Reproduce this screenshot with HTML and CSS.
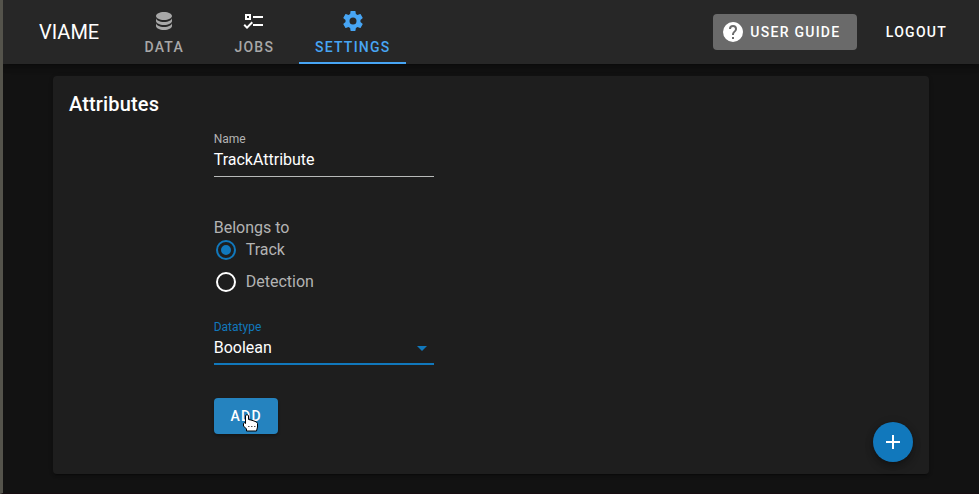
FILE: index.html
```html
<!DOCTYPE html>
<html lang="en">
<head>
<meta charset="utf-8">
<title>VIAME</title>
<link rel="stylesheet" href="styles.css">
</head>
<body>
<header class="bar">
  <div class="brand">VIAME</div>
  <nav class="tabs">
    <a class="tab"><svg class="icon" viewBox="0 0 24 24"><path d="M12,3C7.58,3 4,4.79 4,7C4,9.21 7.58,11 12,11C16.42,11 20,9.21 20,7C20,4.79 16.42,3 12,3M4,9V12C4,14.21 7.58,16 12,16C16.42,16 20,14.21 20,12V9C20,11.21 16.42,13 12,13C7.58,13 4,11.21 4,9M4,14V17C4,19.21 7.58,21 12,21C16.42,21 20,19.21 20,17V14C20,16.21 16.42,18 12,18C7.58,18 4,16.21 4,14Z"/></svg><span>DATA</span></a>
    <a class="tab"><svg class="icon icon-white" viewBox="0 0 24 24"><path d="M3,5H9V11H3V5M5,7V9H7V7H5M11,7H21V9H11V7M11,15H21V17H11V15M5,20L1.5,16.5L2.91,15.09L5,17.17L9.59,12.59L11,14L5,20Z"/></svg><span>JOBS</span></a>
    <a class="tab tab-active"><svg class="icon" viewBox="0 0 24 24"><path d="M12,15.5A3.5,3.5 0 0,1 8.5,12A3.5,3.5 0 0,1 12,8.5A3.5,3.5 0 0,1 15.5,12A3.5,3.5 0 0,1 12,15.5M19.43,12.97C19.47,12.65 19.5,12.33 19.5,12C19.5,11.67 19.47,11.34 19.43,11L21.54,9.37C21.73,9.22 21.78,8.95 21.66,8.73L19.66,5.27C19.54,5.05 19.27,4.96 19.05,5.05L16.56,6.05C16.04,5.66 15.5,5.32 14.87,5.07L14.5,2.42C14.46,2.18 14.25,2 14,2H10C9.75,2 9.54,2.18 9.5,2.42L9.13,5.07C8.5,5.32 7.96,5.66 7.44,6.05L4.95,5.05C4.73,4.96 4.46,5.05 4.34,5.27L2.34,8.73C2.21,8.95 2.27,9.22 2.46,9.37L4.57,11C4.53,11.34 4.5,11.67 4.5,12C4.5,12.33 4.53,12.65 4.57,12.97L2.46,14.63C2.27,14.78 2.21,15.05 2.34,15.27L4.34,18.73C4.46,18.95 4.73,19.03 4.95,18.95L7.44,17.94C7.96,18.34 8.5,18.68 9.13,18.93L9.5,21.58C9.54,21.82 9.75,22 10,22H14C14.25,22 14.46,21.82 14.5,21.58L14.87,18.93C15.5,18.67 16.04,18.34 16.56,17.94L19.05,18.95C19.27,19.03 19.54,18.95 19.66,18.73L21.66,15.27C21.78,15.05 21.73,14.78 21.54,14.63L19.43,12.97Z"/></svg><span>SETTINGS</span></a>
  </nav>
  <button class="btn guide"><svg class="icon" viewBox="0 0 24 24"><path d="M15.07,11.25L14.17,12.17C13.45,12.89 13,13.5 13,15H11V14.5C11,13.39 11.45,12.39 12.17,11.67L13.41,10.41C13.78,10.05 14,9.55 14,9C14,7.89 13.1,7 12,7A2,2 0 0,0 10,9H8A4,4 0 0,1 12,5A4,4 0 0,1 16,9C16,9.88 15.64,10.67 15.07,11.25M13,19H11V17H13M12,2A10,10 0 0,0 2,12A10,10 0 0,0 12,22A10,10 0 0,0 22,12C22,6.47 17.5,2 12,2Z"/></svg><span>USER GUIDE</span></button>
  <button class="btn logout">LOGOUT</button>
</header>
<main class="card">
  <h1 class="title">Attributes</h1>
  <form class="form">
    <div class="field">
      <label class="label">Name</label>
      <div class="value">TrackAttribute</div>
    </div>
    <div class="group">
      <div class="legend">Belongs to</div>
      <div class="option"><svg class="icon icon-blue" viewBox="0 0 24 24"><path d="M12,20A8,8 0 0,1 4,12A8,8 0 0,1 12,4A8,8 0 0,1 20,12A8,8 0 0,1 12,20M12,2A10,10 0 0,0 2,12A10,10 0 0,0 12,22A10,10 0 0,0 22,12A10,10 0 0,0 12,2M12,7A5,5 0 0,0 7,12A5,5 0 0,0 12,17A5,5 0 0,0 17,12A5,5 0 0,0 12,7Z"/></svg><span>Track</span></div>
      <div class="option"><svg class="icon icon-white" viewBox="0 0 24 24"><path d="M12,20A8,8 0 0,1 4,12A8,8 0 0,1 12,4A8,8 0 0,1 20,12A8,8 0 0,1 12,20M12,2A10,10 0 0,0 2,12A10,10 0 0,0 12,22A10,10 0 0,0 22,12A10,10 0 0,0 12,2Z"/></svg><span>Detection</span></div>
    </div>
    <div class="field field-focus">
      <label class="label">Datatype</label>
      <div class="value"><span>Boolean</span><svg class="icon" viewBox="0 0 24 24"><path d="M7,10L12,15L17,10H7Z"/></svg></div>
    </div>
    <button type="button" class="btn add">ADD
      <svg class="pointer" viewBox="0 0 17 19"><path d="M3.5 1.500Q5-.2 6.500 1.500V5.500L9 6L12 7L14.500 8L15.500 9.500V13L14.500 17H4.500V15L1.500 12V9.500Q2.200 8 3.500 9.500Z"/><path class="pointer-lines" d="M6 12.500H13.500" stroke-dasharray="1.500 1.500"/></svg>
    </button>
  </form>
  <button class="fab"><svg class="icon" viewBox="0 0 24 24"><path d="M19,13H13V19H11V13H5V11H11V5H13V11H19V13Z"/></svg></button>
</main>
</body>
</html>
```
FILE: styles.css
```css
* { box-sizing: border-box; }
body {
  margin: 0;
  height: 494px;
  overflow: hidden;
  background: #121212;
  border-left: 3px solid #54534b;
  border-bottom: 1px solid #160c10;
  color: #fff;
  font-family: Roboto, sans-serif;
  font-size: 16px;
}
.icon { width: 24px; height: 24px; fill: currentColor; display: block; flex: none; }
.icon-white { color: #fff; }
.icon-blue { color: #1178bc; }
.bar {
  display: flex;
  align-items: center;
  height: 64px;
  padding: 0 16px 0 36px;
  background: #272727;
  box-shadow: 0 2px 4px -1px rgba(0,0,0,.2), 0 4px 5px rgba(0,0,0,.14), 0 1px 10px rgba(0,0,0,.12);
}
.brand { width: 80px; font-size: 20px; line-height: 30px; }
.tabs { display: flex; height: 64px; margin-right: auto; }
.tab {
  display: flex;
  flex-direction: column;
  align-items: center;
  min-width: 90px;
  padding: 9px 16px 0;
  gap: 6px;
  color: #a8a8a8;
  font-size: 14px;
  font-weight: 500;
  line-height: 16px;
  letter-spacing: 1.25px;
}
.tab span { margin-right: -.5px; }
.tab-active { width: 107px; color: #47a5f4; border-bottom: 2px solid #47a5f4; }
.btn {
  display: flex;
  align-items: center;
  justify-content: center;
  height: 36px;
  padding: 0 16px;
  border: 0;
  border-radius: 4px;
  background: none;
  color: #fff;
  font: 500 14px/16px Roboto, sans-serif;
  letter-spacing: 1.25px;
  white-space: nowrap;
}
.guide { width: 144px; padding: 0 0 0 8.5px; gap: 5px; justify-content: flex-start; background: #6a6a6a; margin-right: 13px; }
.logout { padding: 0 16px; }
.card {
  position: relative;
  width: 876px;
  height: 398px;
  margin: 12px 0 0 50px;
  padding: 12px 16px;
  border-radius: 4px;
  background: #1e1e1e;
  box-shadow: 0 3px 1px -2px rgba(0,0,0,.2), 0 2px 2px rgba(0,0,0,.14), 0 1px 5px rgba(0,0,0,.12);
}
.title { margin: 0; font-size: 20px; font-weight: 500; line-height: 32px; letter-spacing: .15px; }
.form { width: 220px; margin: 8px 0 0 144.7px; }
.field { height: 49px; padding-top: 4px; border-bottom: 1px solid #b8bab9; }
.label { display: block; color: #b3b3b3; font-size: 12px; line-height: 14px; }
.value { display: flex; align-items: center; justify-content: space-between; height: 26px; }
.field-focus { border-bottom: 2px solid #1178bc; }
.field-focus .label, .field-focus .icon { color: #1178bc; }
.field-focus .icon { margin-top: 2px; }
.group { margin: 41px 0 22px; color: #b3b3b3; }
.legend { line-height: 20px; }
.option { display: flex; align-items: center; gap: 8px; height: 24px; margin-bottom: 8px; }
.option span { padding-bottom: 2px; }
.add { position: relative; width: 64px; padding: 0 0 0 1px; margin-top: 33px; background: #2583bf; box-shadow: 0 2px 3px rgba(0,0,0,.3); }
.pointer { position: absolute; left: 28px; top: 16px; width: 17px; height: 19px; fill: #fff; stroke: #000; stroke-width: 1; }
.pointer-lines { stroke: #555; }
.fab {
  position: absolute;
  right: 16px;
  bottom: 12px;
  display: flex;
  align-items: center;
  justify-content: center;
  width: 40px;
  height: 40px;
  padding: 0;
  border: 0;
  border-radius: 50%;
  background: #1178bc;
  color: #fff;
  box-shadow: 0 3px 5px -1px rgba(0,0,0,.2), 0 6px 10px rgba(0,0,0,.14), 0 1px 10px rgba(0,0,0,.12);
}
```
